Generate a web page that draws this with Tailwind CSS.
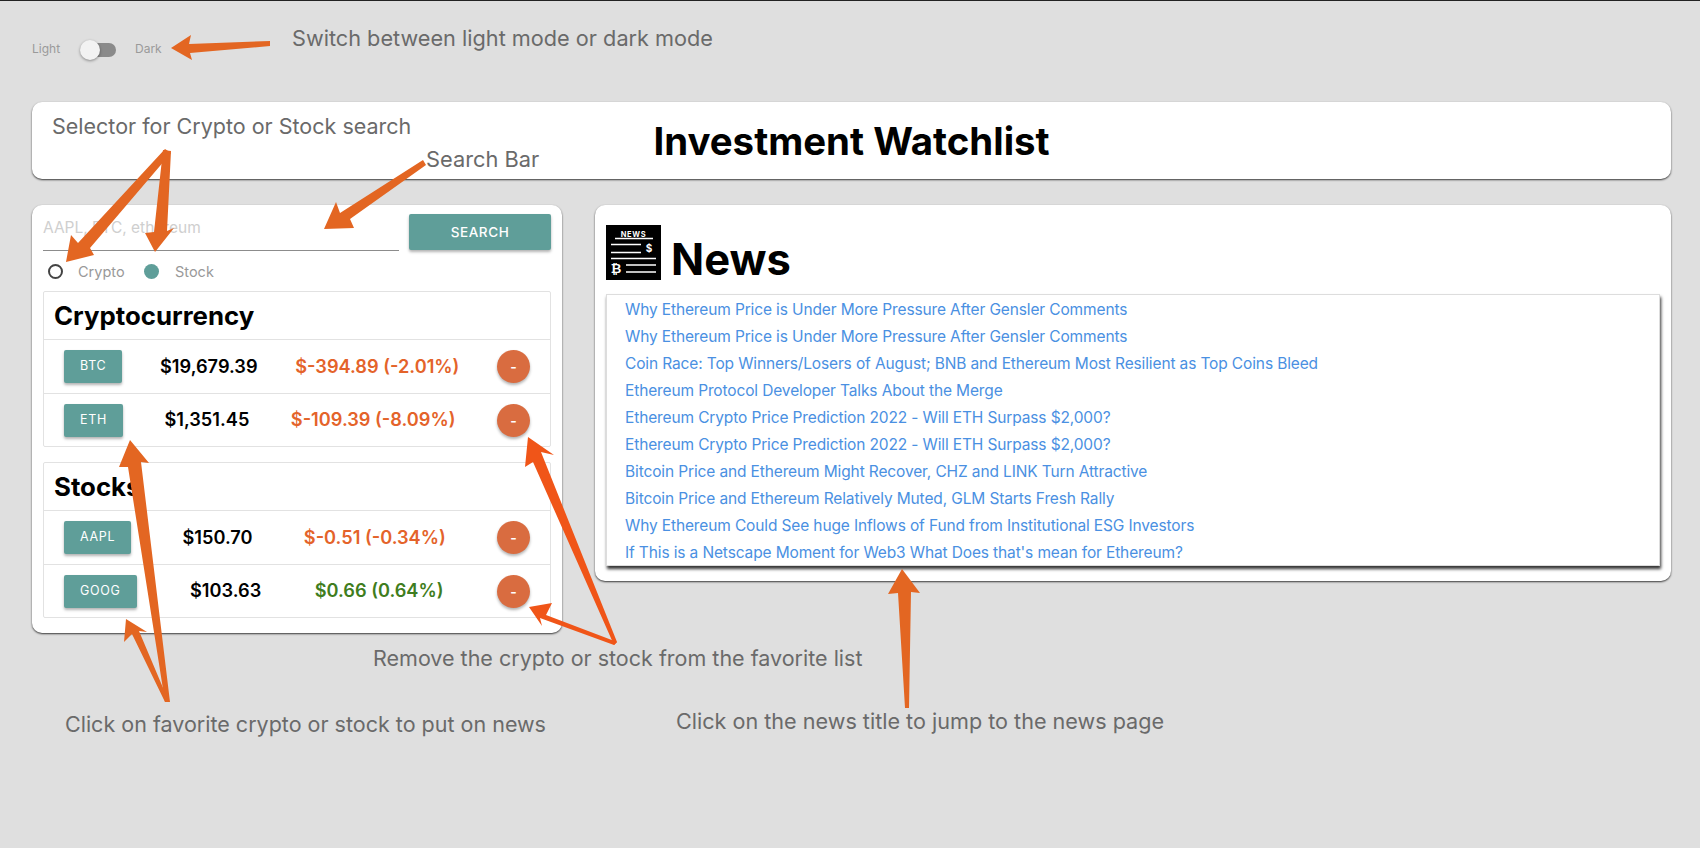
<!DOCTYPE html>
<html>

<head>
	<meta charset="utf-8" />
	<title>Investment Watchlist</title>
	<script src="https://cdn.jsdelivr.net/npm/@tailwindcss/browser@4"></script>
</head>

<body class="relative h-[848px] overflow-hidden bg-[#dfdfdf] border-t border-[#222] [font-family:Inter,sans-serif]">
	<!-- theme switch -->
	<div class="flex items-center h-5 mt-[39px] mb-[42px] pl-[32px] text-[12px] text-[#9a9a9a]">
		<span class="w-[48px] pb-[2px]">Light</span>
		<div class="relative w-[36px] h-5">
			<div class="absolute left-[5px] top-[3px] w-[31px] h-[14px] rounded-full bg-[#8a8a8a]"></div>
			<div class="absolute left-0 top-0 w-5 h-5 rounded-full bg-[#f2f2f2] shadow-[0_1px_3px_rgba(0,0,0,.4)]"></div>
		</div>
		<span class="ml-[19px] pb-[2px]">Dark</span>
	</div>

	<!-- title -->
	<div class="mx-[32px] mr-[29px] h-[77px] flex items-center justify-center bg-white rounded-[10px] shadow-[0_1px_2px_rgba(0,0,0,.75)]">
		<h1 class="text-[38.400px] font-bold text-black pt-[2px]">Investment Watchlist</h1>
	</div>

	<div class="flex items-start gap-[33px] mt-[26px] ml-[32px] mr-[29px]">
		<!-- watchlist -->
		<div class="w-[530px] shrink-0 px-[11px] pt-[9px] pb-[15px] bg-white rounded-[10px] shadow-[0_1px_2px_rgba(0,0,0,.75)]">
			<div class="flex items-start gap-[10px]">
				<div class="w-[356px] h-[37px] border-b border-[#8c8c8c] text-[15.500px] leading-[28px] text-[#cfcfcf]">AAPL, BTC, ethereum</div>
				<button class="w-[142px] h-[36px] rounded-[2px] bg-[#5f9e99] text-white text-[13.500px] font-medium tracking-[.6px] shadow-[0_2px_3px_rgba(0,0,0,.3)]">SEARCH</button>
			</div>
			<div class="flex items-center h-[40px] text-[14.500px] text-[#999]">
				<span class="ml-[5px] w-[15px] h-[15px] rounded-full border-2 border-[#444]"></span>
				<span class="ml-[15px] w-[66px] pt-[1px]">Crypto</span>
				<span class="w-[15px] h-[15px] rounded-full bg-[#5f9e99]"></span>
				<span class="ml-[16px] pt-[1px]">Stock</span>
			</div>

			<div class="border border-[#e2e2e2] rounded-[2px]">
				<h2 class="h-[47px] pl-[10px] pt-[2px] flex items-center text-[25.800px] font-bold text-black">Cryptocurrency</h2>
				<div class="flex items-center justify-between h-[54px] px-[20px] border-t border-[#e2e2e2]">
					<button class="h-[33px] px-[16px] rounded-[2px] bg-[#5f9e99] text-white text-[12.500px] tracking-[.7px] shadow-[0_2px_3px_rgba(0,0,0,.3)]">BTC</button>
					<span class="text-[18.200px] font-semibold text-black">$19,679.39</span>
					<span class="text-[18.200px] font-semibold text-[#e4632a]">$-394.89 (-2.01%)</span>
					<button class="w-[33px] h-[33px] rounded-full bg-[#d96c40] text-white text-[14px] font-semibold shadow-[0_2px_3px_rgba(0,0,0,.3)]">-</button>
				</div>
				<div class="flex items-center justify-between h-[53px] px-[20px] border-t border-[#e2e2e2]">
					<button class="h-[33px] px-[16px] rounded-[2px] bg-[#5f9e99] text-white text-[12.500px] tracking-[.7px] shadow-[0_2px_3px_rgba(0,0,0,.3)]">ETH</button>
					<span class="text-[18.200px] font-semibold text-black">$1,351.45</span>
					<span class="text-[18.200px] font-semibold text-[#e4632a]">$-109.39 (-8.09%)</span>
					<button class="w-[33px] h-[33px] rounded-full bg-[#d96c40] text-white text-[14px] font-semibold shadow-[0_2px_3px_rgba(0,0,0,.3)]">-</button>
				</div>
			</div>

			<div class="mt-[15px] border border-[#e2e2e2] rounded-[2px]">
				<h2 class="h-[47px] pl-[10px] pt-[2px] flex items-center text-[25.800px] font-bold text-black">Stocks</h2>
				<div class="flex items-center justify-between h-[54px] px-[20px] border-t border-[#e2e2e2]">
					<button class="h-[33px] px-[16px] rounded-[2px] bg-[#5f9e99] text-white text-[12.500px] tracking-[.7px] shadow-[0_2px_3px_rgba(0,0,0,.3)]">AAPL</button>
					<span class="text-[18.200px] font-semibold text-black">$150.70</span>
					<span class="text-[18.200px] font-semibold text-[#e4632a]">$-0.51 (-0.34%)</span>
					<button class="w-[33px] h-[33px] rounded-full bg-[#d96c40] text-white text-[14px] font-semibold shadow-[0_2px_3px_rgba(0,0,0,.3)]">-</button>
				</div>
				<div class="flex items-center justify-between h-[53px] px-[20px] border-t border-[#e2e2e2]">
					<button class="h-[33px] px-[16px] rounded-[2px] bg-[#5f9e99] text-white text-[12.500px] tracking-[.7px] shadow-[0_2px_3px_rgba(0,0,0,.3)]">GOOG</button>
					<span class="text-[18.200px] font-semibold text-black">$103.63</span>
					<span class="text-[18.200px] font-semibold text-[#3f7d20]">$0.66 (0.64%)</span>
					<button class="w-[33px] h-[33px] rounded-full bg-[#d96c40] text-white text-[14px] font-semibold shadow-[0_2px_3px_rgba(0,0,0,.3)]">-</button>
				</div>
			</div>
		</div>

		<!-- news -->
		<div class="flex-1 h-[376px] pl-[11px] pr-[11px] pt-[20px] bg-white rounded-[10px] shadow-[0_1px_2px_rgba(0,0,0,.75)]">
			<div class="flex items-center gap-[10px] h-[55px]">
				<svg width="55" height="55" viewBox="0 0 55 55" class="shrink-0">
					<rect width="55" height="55" fill="#000" />
					<text x="27.500" y="11.500" text-anchor="middle" fill="#fff" font-family="Inter, sans-serif" font-size="7.500" font-weight="700" letter-spacing=".7">NEWS</text>
					<path d="M9 13.500h38M5 19.500h30M5 27.500h30M5 33.500h45M20 40h30M20 47h30" stroke="#fff" stroke-width="1.500" />
					<text x="43" y="27" text-anchor="middle" fill="#fff" font-family="Inter, sans-serif" font-size="10" font-weight="700">$</text>
					<text x="10" y="48" text-anchor="middle" fill="#fff" font-family="'DejaVu Sans', sans-serif" font-size="13" font-weight="700">₿</text>
				</svg>
				<h2 class="pt-[15px] text-[43.500px] font-bold text-black">News</h2>
			</div>
			<ul class="mt-[14px] h-[272px] pl-[18px] pt-[1px] border border-[#ddd] shadow-[1px_3px_3px_rgba(0,0,0,.8)] text-[15.500px] tracking-[-.13px] leading-[27px] text-[#4a90e2]">
				<li>Why Ethereum Price is Under More Pressure After Gensler Comments</li>
				<li>Why Ethereum Price is Under More Pressure After Gensler Comments</li>
				<li>Coin Race: Top Winners/Losers of August; BNB and Ethereum Most Resilient as Top Coins Bleed</li>
				<li>Ethereum Protocol Developer Talks About the Merge</li>
				<li>Ethereum Crypto Price Prediction 2022 - Will ETH Surpass $2,000?</li>
				<li>Ethereum Crypto Price Prediction 2022 - Will ETH Surpass $2,000?</li>
				<li>Bitcoin Price and Ethereum Might Recover, CHZ and LINK Turn Attractive</li>
				<li>Bitcoin Price and Ethereum Relatively Muted, GLM Starts Fresh Rally</li>
				<li>Why Ethereum Could See huge Inflows of Fund from Institutional ESG Investors</li>
				<li>If This is a Netscape Moment for Web3 What Does that's mean for Ethereum?</li>
			</ul>
		</div>
	</div>

	<!-- annotations drawn over the screenshot -->
	<span class="absolute left-[292px] top-[23px] text-[21.700px] leading-[28px] text-[#6a6a6a]">Switch between light mode or dark mode</span>
	<span class="absolute left-[52px] top-[111px] text-[21.500px] leading-[28px] text-[#6a6a6a]">Selector for Crypto or Stock search</span>
	<span class="absolute left-[426px] top-[144px] text-[21.800px] leading-[28px] text-[#6a6a6a]">Search Bar</span>
	<span class="absolute left-[373px] top-[643px] text-[21.500px] leading-[28px] text-[#6a6a6a]">Remove the crypto or stock from the favorite list</span>
	<span class="absolute left-[65px] top-[709px] text-[21.500px] leading-[28px] text-[#6a6a6a]">Click on favorite crypto or stock to put on news</span>
	<span class="absolute left-[676px] top-[706px] text-[21.600px] leading-[28px] text-[#6a6a6a]">Click on the news title to jump to the news page</span>

	<svg class="absolute left-0 top-[-1px] pointer-events-none" width="1700" height="848" viewBox="0 0 1700 848">
		<g fill="#e36622">
			<polygon points="171,48 191,35 189,44 270,41 270,46 190,53 192,60" />
			<polygon points="165,149 171,153 90,248 94,255 66,262 71,235 78,243" />
			<polygon points="163,150 171,151 167,231 174,228 155,252 145,233 154,232" />
			<polygon points="423,160 426,165 350,219 354,228 324,229 336,202 340,213" />
			<polygon points="130,440 149,463 141,462 170,702 165,702 128,467 119,467" />
			<polygon points="126,619 147,632 139,631 169,702 165,702 132,634 124,642" />
			<polygon points="902,569 920,593 911,592 909,708 905,708 898,593 888,594" />
		</g>
		<g fill="#f05518">
			<polygon points="528,437 554,455 541,452 617,642 614,645 533,462 525,467" />
			<polygon points="529,607 552,603 546,615 617,642 614,645 540,618 542,626" />
		</g>
	</svg>
</body>

</html>
